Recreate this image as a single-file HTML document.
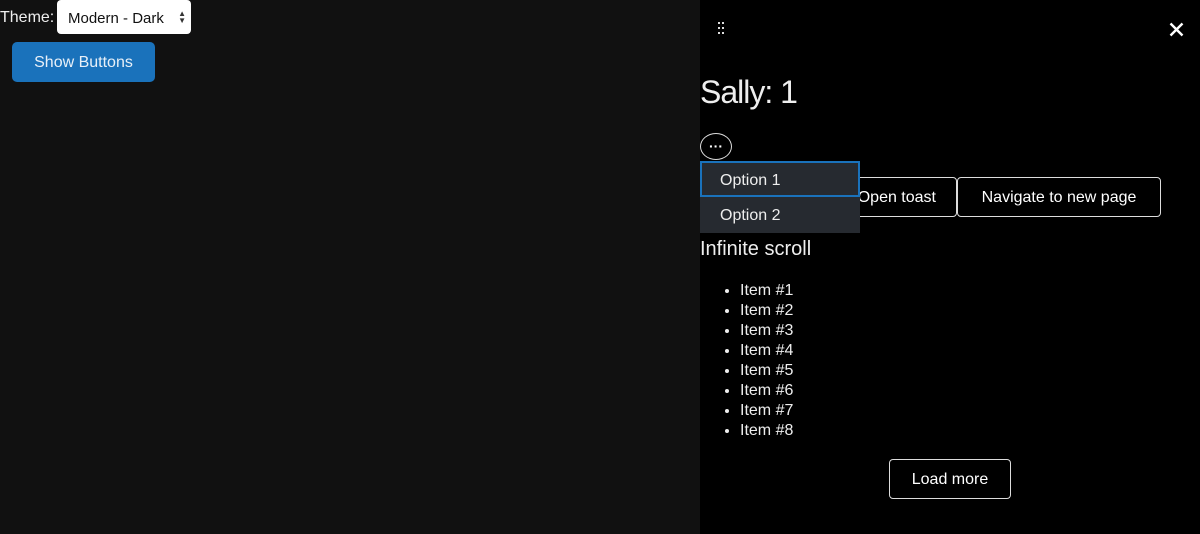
<!DOCTYPE html>
<html><head><style>
*{box-sizing:border-box;margin:0;padding:0}
body{width:1200px;height:534px;background:#111;font-family:"Liberation Sans",sans-serif;color:#fff;position:relative;overflow:hidden}
.a{position:absolute;white-space:nowrap}
.btn{position:absolute;border:1px solid #ddd;border-radius:4px;color:#fff;font-size:16px;display:flex;align-items:center;justify-content:center;background:#000;padding-top:2px}
</style></head><body>
<div class="a" style="left:0;top:9px;font-size:16px;color:#eee">Theme:</div>
<div class="a" style="left:57px;top:0;width:134px;height:34px;background:#fff;border-radius:4px;color:#111;font-size:15px;padding:10px 0 0 11px">Modern - Dark<span style="position:absolute;right:5px;top:10px;font-size:8px;line-height:7px;color:#333">▲<br>▼</span></div>
<div class="a" style="left:12px;top:42px;width:143px;height:40px;background:#1a72bb;border-radius:5px;font-size:16px;display:flex;align-items:center;justify-content:center;color:#e8f0f8;padding-top:2px">Show Buttons</div>
<div class="a" style="left:700px;top:0;width:500px;height:534px;background:#000"></div>
<svg class="a" style="left:717px;top:22px" width="10" height="14"><g fill="#ddd"><rect x="1" y="0" width="2" height="2"/><rect x="5" y="0" width="2" height="2"/><rect x="1" y="5" width="2" height="2"/><rect x="5" y="5" width="2" height="2"/><rect x="1" y="10" width="2" height="2"/><rect x="5" y="10" width="2" height="2"/></g></svg>
<svg class="a" style="left:1169px;top:22px" width="15" height="15"><path d="M1.5 1.5L13.5 13.5M13.5 1.5L1.5 13.5" stroke="#fff" stroke-width="2.4"/></svg>
<div class="a" style="left:700px;top:74px;font-size:32px;color:#eee;letter-spacing:-1px">Sally: 1</div>
<div class="a" style="left:700px;top:133px;width:32px;height:27px;border:1px solid #ddd;border-radius:50%;text-align:center;font-size:14px;line-height:24px;font-weight:bold">···</div>
<div class="btn" style="left:830px;top:177px;width:127px;height:40px;justify-content:flex-end;padding-right:20px">Open toast</div>
<div class="btn" style="left:957px;top:177px;width:204px;height:40px">Navigate to new page</div>
<div class="a" style="left:700px;top:161px;width:160px;height:72px;background:#262a30"></div>
<div class="a" style="left:700px;top:161px;width:160px;height:36px;border:2px solid #1a72bb;padding:9px 0 0 18px;font-size:16px;color:#eee">Option 1</div>
<div class="a" style="left:720px;top:207px;font-size:16px;color:#eee">Option 2</div>
<div class="a" style="left:700px;top:238px;font-size:20px;color:#eee">Infinite scroll</div>
<ul class="a" style="left:740px;top:281px;font-size:16px;line-height:20px;color:#eee">
<li>Item #1</li><li>Item #2</li><li>Item #3</li><li>Item #4</li><li>Item #5</li><li>Item #6</li><li>Item #7</li><li>Item #8</li></ul>
<div class="btn" style="left:889px;top:459px;width:122px;height:40px">Load more</div>
</body></html>
